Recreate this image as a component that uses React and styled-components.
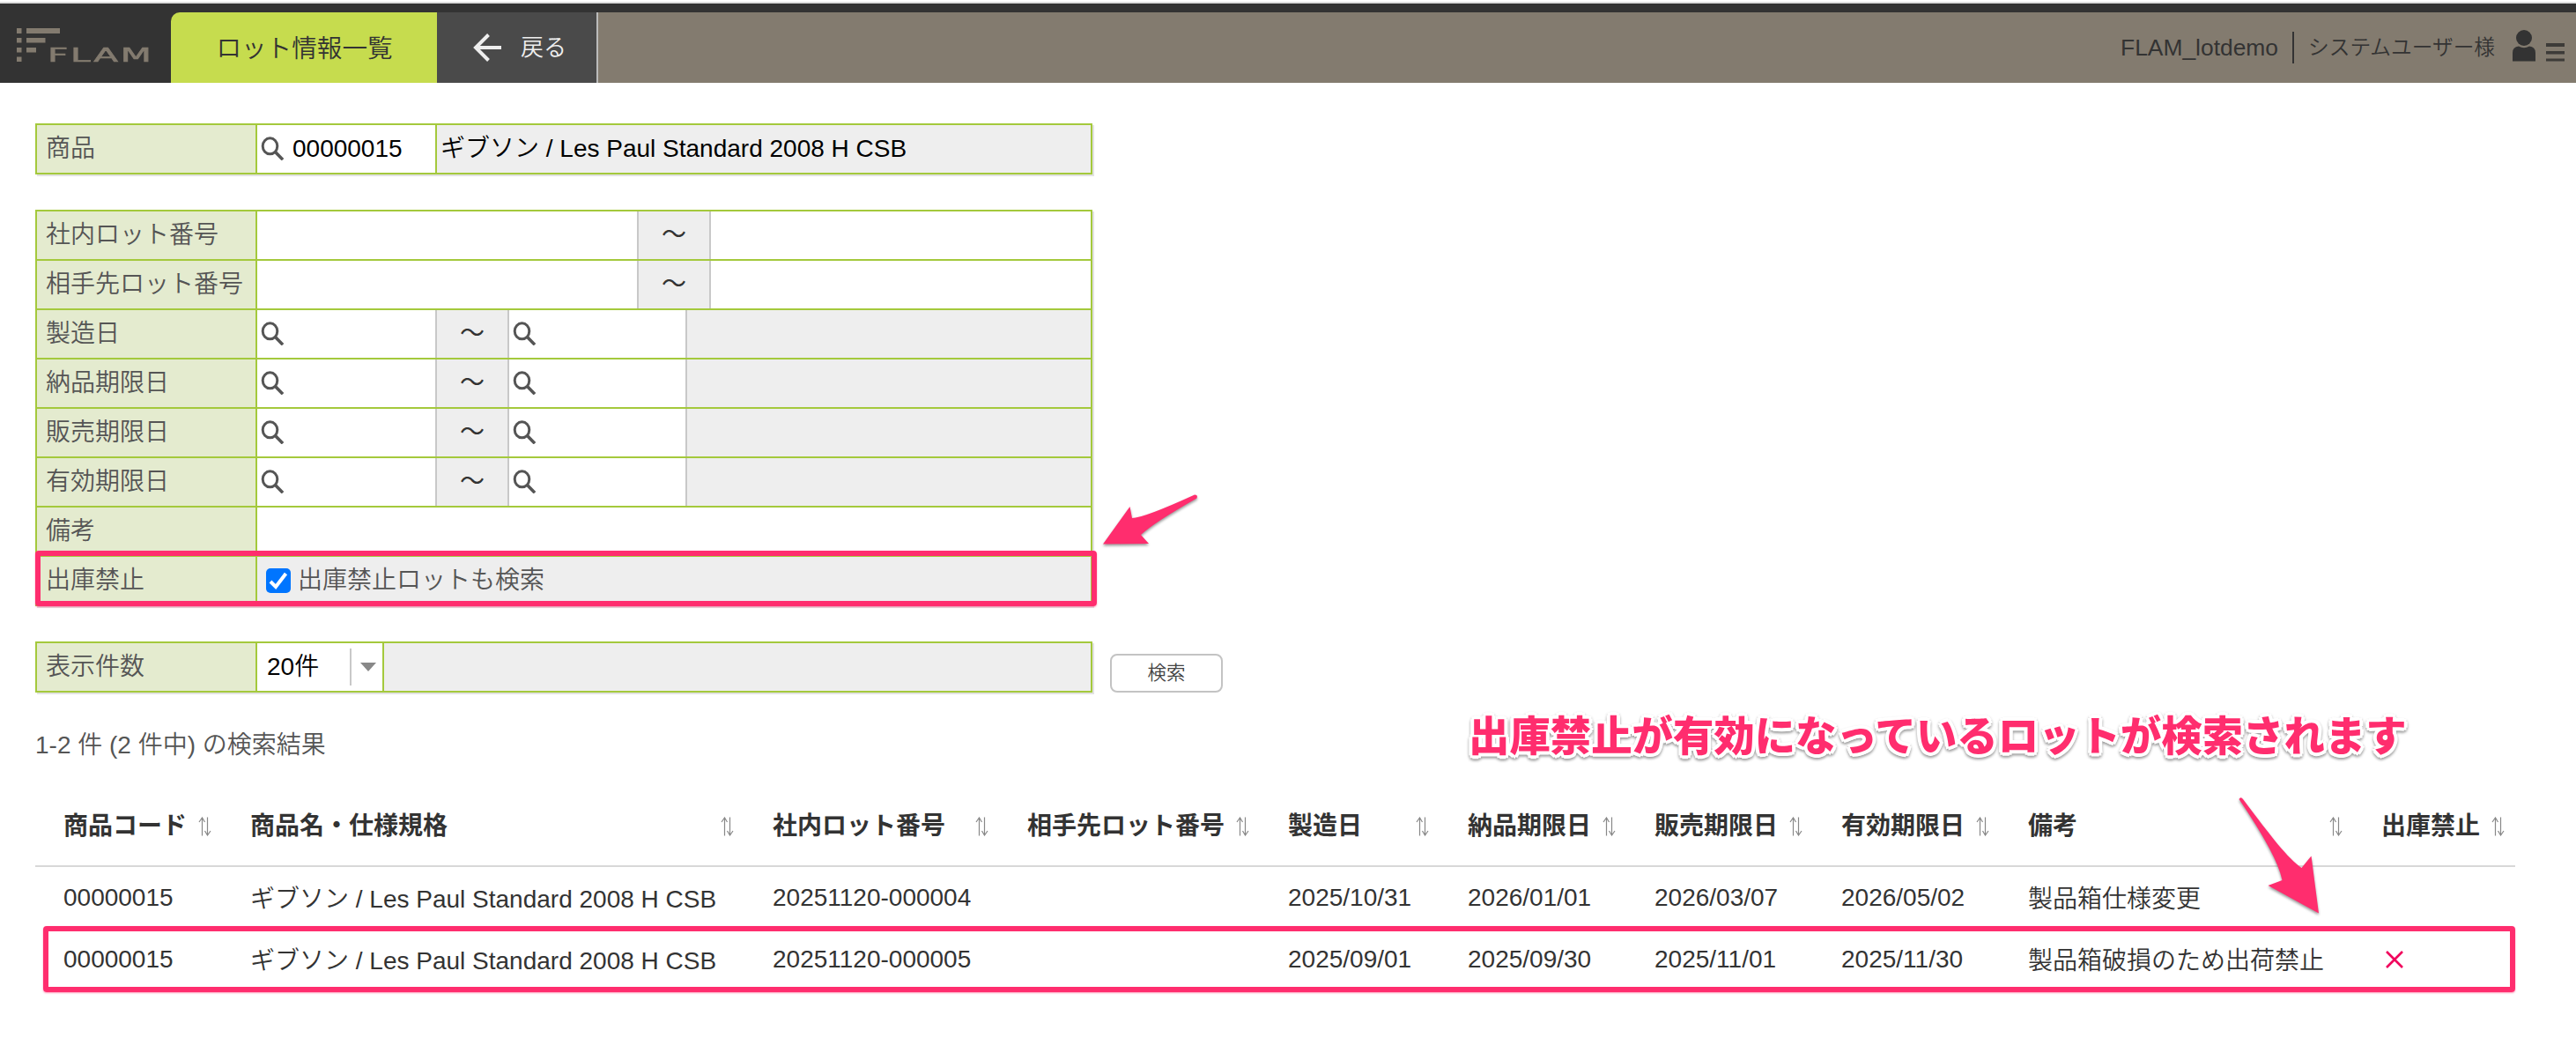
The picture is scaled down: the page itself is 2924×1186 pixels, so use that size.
import React from "react";
import styled, { createGlobalStyle } from "styled-components";

const green = "#a4c93c";
const pink = "#ff2d6e";

const Global = createGlobalStyle`
  * { box-sizing: border-box; }
  body {
    margin: 0;
    background: #fff;
    color: #555;
    font-family: "Liberation Sans", "Noto Sans CJK JP", sans-serif;
    font-size: 28px;
    font-weight: 350;
    line-height: 40px;
  }
`;

const Page = styled.div`
  position: relative;
  width: 2924px;
  height: 1186px;
  overflow: hidden;
`;

const Header = styled.header`
  margin-top: 2px;
  border-top: 2px solid #dedede;
  height: 92px;
  padding-top: 10px;
  background: #333;
  display: flex;
`;

const Brand = styled.div`
  width: 194px;
  padding: 18px 0 0 19px;
  display: flex;
`;

const BrandMark = styled.svg`
  width: 50px;
  height: 38px;
  flex: none;
`;

const BrandName = styled.span`
  margin: 21px 0 0 -15px;
  font-family: "DejaVu Sans", sans-serif;
  font-weight: 400;
  font-size: 21.5px;
  line-height: 20px;
  color: #837b6f;
  letter-spacing: 1.4px;
  -webkit-text-stroke: 0.6px #837b6f;
  transform: scaleX(1.89);
  transform-origin: 0 50%;
  white-space: nowrap;
`;

const Title = styled.h1`
  margin: 0;
  width: 302px;
  padding-left: 1px;
  border-top-left-radius: 10px;
  background: #c6dc4e;
  color: #333;
  font-size: 28.6px;
  font-weight: 350;
  line-height: 82px;
  text-align: center;
`;

const Back = styled.a`
  width: 183px;
  padding-left: 41px;
  border-right: 2px solid #bbb;
  background: #4a4a4a;
  color: #eee;
  display: flex;
  align-items: center;
  gap: 22px;
  font-size: 26px;
`;

const UserArea = styled.div`
  flex: 1;
  padding-right: 13px;
  background: #837b6f;
  color: #333;
  display: flex;
  align-items: center;
  justify-content: flex-end;
  font-size: 26.4px;
`;

const Divider = styled.span`
  width: 2px;
  height: 36px;
  margin: 0 16px 0 16px;
  background: #333;
`;

const UserName = styled.span`
  width: 213px;
  font-size: 23.7px;
  white-space: nowrap;
`;

const UserIcon = styled.svg`
  width: 26px;
  height: 36px;
  margin: -5px 12px 0 19px;
`;

const MenuIcon = styled.svg`
  width: 21px;
  height: 21px;
  margin-top: 10px;
`;

const Main = styled.main`
  padding: 46px 40px 0;
`;

const Panel = styled.section`
  width: 1200px;
  border: 2px solid ${green};
  box-shadow: 2px 2px 0 #e2e2e2;
  margin-bottom: ${(p) => p.$gap || 0}px;
`;

const Row = styled.div`
  position: relative;
  display: flex;
  height: 54px;
  background: #eee;
  & + & {
    height: 56px;
    border-top: 2px solid ${green};
  }
`;

const Label = styled.div`
  width: 250px;
  flex: none;
  padding-left: 10px;
  border-right: 2px solid ${green};
  background: #e4ebcf;
  line-height: 54px;
  white-space: nowrap;
`;

const Field = styled.div`
  width: ${(p) => p.$w}px;
  flex: none;
  padding-left: 4px;
  background: #fff;
  color: #000;
  display: flex;
  align-items: center;
  gap: 9px;
`;

const CodeField = styled(Field)`
  border-right: 2px solid ${green};
`;

const Tilde = styled.div`
  width: 84px;
  flex: none;
  border: solid #c8c8c8;
  border-width: 0 2px;
  background: #eee;
  color: #333;
  text-align: center;
  font-weight: 400;
  line-height: 54px;
`;

const Rest = styled.div`
  flex: 1;
  border-left: ${(p) => (p.$line ? "2px solid #c8c8c8" : "0")};
  background: #eee;
  padding-left: 4px;
  color: #000;
  line-height: 54px;
`;

const CheckField = styled.label`
  flex: 1;
  padding-left: 10px;
  display: flex;
  align-items: center;
  gap: 8px;
`;

const Checkbox = styled.span`
  width: 28px;
  height: 28px;
  border-radius: 5px;
  background: #0075ff;
  display: flex;
`;

const Select = styled.div`
  width: 144px;
  padding: 0 7px 0 11px;
  border-right: 2px solid ${green};
  background: #fff;
  color: #000;
  display: flex;
  align-items: center;
`;

const SelectLine = styled.span`
  width: 2px;
  height: 42px;
  margin: 0 10px 0 auto;
  background: #c8c8c8;
`;

const Caret = styled.span`
  border: solid transparent;
  border-width: 10px 9.5px 0;
  border-top-color: #888;
`;

const SearchLine = styled.div`
  display: flex;
  align-items: flex-end;
  gap: 20px;
`;

const Button = styled.button`
  width: 128px;
  height: 44px;
  padding: 0 0 4px;
  border: 2px solid #c3c3c3;
  border-radius: 8px;
  background: #fff;
  color: #444;
  font: 350 21.5px/36px "Noto Sans CJK JP", sans-serif;
`;

const Count = styled.p`
  margin: 40px 0 22px;
`;

const Table = styled.table`
  width: 2815px;
  table-layout: fixed;
  border-collapse: separate;
  border-spacing: 0;
  color: #333;
`;

const Th = styled.th`
  height: 96px;
  padding: 5px 12px 0 32px;
  border-bottom: 2px solid #d8d8d8;
  text-align: left;
  white-space: nowrap;
`;

const ThInner = styled.div`
  display: flex;
  align-items: center;
  justify-content: space-between;
`;

const Td = styled.td`
  height: 70px;
  padding: ${(p) => (p.$drop ? "3px 0 0 32px" : "0 0 0 32px")};
  white-space: nowrap;
`;

const Mark = styled.svg`
  display: block;
  margin-left: 5px;
`;

const Highlight = styled.div`
  position: absolute;
  left: ${(p) => p.$x}px;
  top: ${(p) => p.$y}px;
  width: ${(p) => p.$w}px;
  height: ${(p) => p.$h}px;
  border: 6px solid ${pink};
  border-radius: 4px;
  box-shadow: 0 1px 2px rgba(255, 45, 110, 0.5);
  pointer-events: none;
`;

const Callout = styled.div`
  position: absolute;
  left: 1667px;
  top: 798px;
  color: ${pink};
  font: 900 46.4px/68px "Noto Sans CJK JP", sans-serif;
  white-space: nowrap;
  text-shadow:
    4px 0 0 #fff, -4px 0 0 #fff, 0 4px 0 #fff, 0 -4px 0 #fff,
    2.8px 2.8px 0 #fff, -2.8px 2.8px 0 #fff, 2.8px -2.8px 0 #fff, -2.8px -2.8px 0 #fff;
  filter: drop-shadow(0 2px 1.5px rgba(0, 0, 0, 0.4));
`;

const Arrow = styled.svg`
  position: absolute;
  left: ${(p) => p.$x}px;
  top: ${(p) => p.$y}px;
  overflow: visible;
  fill: ${pink};
  filter: drop-shadow(0 2px 1.5px rgba(0, 0, 0, 0.4));
`;

const MagnifierIcon = styled.svg`
  flex: none;
  margin-top: -3px;
`;

const Magnifier = () => (
  <MagnifierIcon width="27" height="28" viewBox="0 0 27 28" fill="none" stroke="#555">
    <ellipse cx="10.5" cy="11.8" rx="8.3" ry="9" strokeWidth="3" />
    <path d="M16.5 18.5 L25 27.2" strokeWidth="3.6" />
  </MagnifierIcon>
);

const SortIcon = () => (
  <svg width="15" height="22" viewBox="0 0 15 22" fill="none" stroke="#888" strokeWidth="1.2">
    <path d="M4.5 21.5V1M1 6L4.5 1L7.5 6M10.5 0.5V21M7.5 16L10.5 21L14 16" />
  </svg>
);

const columns = [
  ["商品コード", 212],
  ["商品名・仕様規格", 593],
  ["社内ロット番号", 289],
  ["相手先ロット番号", 296],
  ["製造日", 204],
  ["納品期限日", 212],
  ["販売期限日", 212],
  ["有効期限日", 212],
  ["備考", 401],
  ["出庫禁止", 184],
];

const product = "ギブソン / Les Paul Standard 2008 H CSB";

const lots = [
  ["00000015", product, "20251120-000004", "", "2025/10/31", "2026/01/01", "2026/03/07", "2026/05/02", "製品箱仕様変更", false],
  ["00000015", product, "20251120-000005", "", "2025/09/01", "2025/09/30", "2025/11/01", "2025/11/30", "製品箱破損のため出荷禁止", true],
];

const Forbidden = () => (
  <Mark width="20" height="20" viewBox="0 0 20 20" stroke="#f0005c" strokeWidth="2.6">
    <path d="M1 1L19 19M19 1L1 19" />
  </Mark>
);

export default function App() {
  return (
    <Page>
      <Global />
      <Header>
        <Brand>
          <BrandMark viewBox="0 0 50 38" fill="#837b6f">
            <path d="M0 0h5.5v6H0zM11 0h38v6H11zM0 11h5.5v5.500H0zM11 11h21.500v5.500H11zM0 22h5.500v5.500H0zM11 22h11v5.500H11zM0 32.500h5.500v5.500H0z" />
          </BrandMark>
          <BrandName>FLAM</BrandName>
        </Brand>
        <Title>ロット情報一覧</Title>
        <Back>
          <svg width="32" height="32" viewBox="0 0 32 32" fill="none" stroke="#eee" strokeWidth="4">
            <path d="M32 16H3M17.500 1.500L3 16L17.500 30.500" />
          </svg>
          戻る
        </Back>
        <UserArea>
          <span>FLAM_lotdemo</span>
          <Divider />
          <UserName>システムユーザー様</UserName>
          <UserIcon viewBox="0 0 26 36" fill="#333">
            <circle cx="13" cy="9" r="9" />
            <path d="M0 35.500V26Q0 19 7 18.500Q13 22 19 18.500Q26 19 26 26V35.500Z" />
          </UserIcon>
          <MenuIcon viewBox="0 0 21 21" fill="#3d3b38">
            <path d="M0 0h21v4H0zM0 9h21v3.500H0zM0 17.500h21v3H0z" />
          </MenuIcon>
        </UserArea>
      </Header>

      <Main>
        <Panel $gap={40}>
          <Row>
            <Label>商品</Label>
            <CodeField $w={204}><Magnifier />00000015</CodeField>
            <Rest>{product}</Rest>
          </Row>
        </Panel>

        <Panel $gap={40}>
          {["社内ロット番号", "相手先ロット番号"].map((name) => (
            <Row key={name}>
              <Label>{name}</Label>
              <Field $w={431} />
              <Tilde>～</Tilde>
              <Field $w={431} />
            </Row>
          ))}
          {["製造日", "納品期限日", "販売期限日", "有効期限日"].map((name) => (
            <Row key={name}>
              <Label>{name}</Label>
              <Field $w={202}><Magnifier /></Field>
              <Tilde>～</Tilde>
              <Field $w={200}><Magnifier /></Field>
              <Rest $line />
            </Row>
          ))}
          <Row>
            <Label>備考</Label>
            <Field $w={946} />
          </Row>
          <Row>
            <Label>出庫禁止</Label>
            <CheckField>
              <Checkbox>
                <svg width="28" height="28" viewBox="0 0 28 28" fill="none" stroke="#fff" strokeWidth="4">
                  <path d="M5 15L11 21L22.500 6" />
                </svg>
              </Checkbox>
              出庫禁止ロットも検索
            </CheckField>
            <Highlight $x={-2} $y={-7} $w={1205} $h={63} />
          </Row>
        </Panel>

        <SearchLine>
          <Panel>
            <Row>
              <Label>表示件数</Label>
              <Select>20件<SelectLine /><Caret /></Select>
              <Rest />
            </Row>
          </Panel>
          <Button>検索</Button>
        </SearchLine>

        <Count>1-2 件 (2 件中) の検索結果</Count>

        <Table>
          <colgroup>
            {columns.map(([name, width]) => <col key={name} width={width} />)}
          </colgroup>
          <thead>
            <tr>
              {columns.map(([name]) => (
                <Th key={name}><ThInner>{name}<SortIcon /></ThInner></Th>
              ))}
            </tr>
          </thead>
          <tbody>
            {lots.map((lot) => (
              <tr key={lot[2]}>
                {lot.map((value, i) => (
                  <Td key={i} $drop={i === 1 || i === 8}>
                    {i === 9 ? value && <Forbidden /> : value}
                  </Td>
                ))}
              </tr>
            ))}
          </tbody>
        </Table>
      </Main>

      <Highlight $x={49} $y={1051} $w={2806} $h={75} />
      <Callout>出庫禁止が有効になっているロットが検索されます</Callout>
      <Arrow $x={1252} $y={561} width="108" height="57" viewBox="0 0 108 57">
        <path d="M0 56.500L30.500 14L33 27Q46 27 104 0.500Q108 0.500 106.500 4.500Q58 32 43 46L52 56Z" />
      </Arrow>
      <Arrow $x={2541} $y={905} width="91" height="132" viewBox="0 0 91 132">
        <path d="M0.500 2Q2.500 -1.500 5 2C38 46 56 69 71.500 80L82.500 66.500L91 131.500L33.500 100L49.500 94Q44 66 0.500 2Z" />
      </Arrow>
    </Page>
  );
}
